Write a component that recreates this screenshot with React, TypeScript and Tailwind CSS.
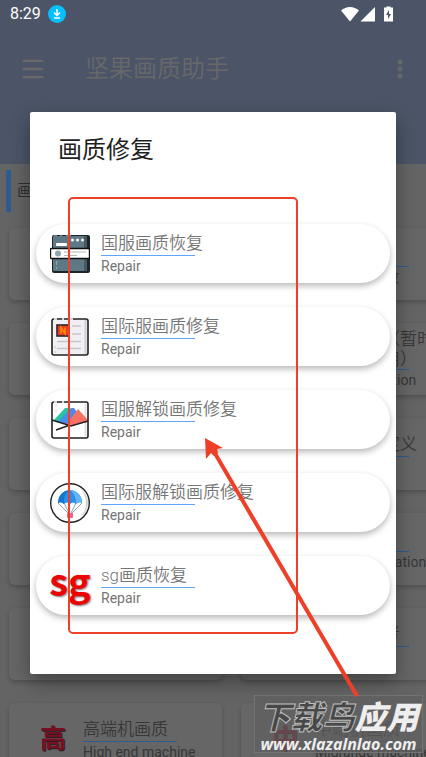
import type { ReactNode } from "react";
import { Menu } from "lucide-react";

interface RepairOption {
  title: string;
  subtitle: string;
  icon: ReactNode;
}

interface Feature {
  title: string;
  subtitle: string;
  icon?: string;
  tall?: boolean;
}

function ServerIcon() {
  return (
    <svg viewBox="0 0 40 40" className="h-10 w-10">
      <rect x="2" y="1" width="38" height="38" rx="2" fill="#1f2628" />
      <rect x="3" y="2" width="34" height="35" rx="1" fill="#5f7885" />
      <path d="M34 2h3v35h-3z" fill="#465a64" />
      <path d="M4 1h3M10 1h2M16 1h5" stroke="#d3dade" strokeWidth="1" />
      <rect x="6" y="9" width="11" height="3" rx="1" fill="#fff" />
      <circle cx="22.500" cy="6" r="1.500" fill="#fff" />
      <circle cx="27.500" cy="6" r="1.500" fill="#fff" />
      <circle cx="32.500" cy="6" r="1.500" fill="#fff" />
      <rect x="0.500" y="14.500" width="39" height="10" rx="1" fill="#fff" stroke="#111" strokeWidth="1.400" />
      <circle cx="8" cy="19.500" r="3" fill="#90a4b0" />
      <path d="M14 18h22M14 21.500h13" stroke="#b8b8b8" strokeWidth="1.200" />
      <path d="M6.500 27v4M6.500 33v2" stroke="#93a5ae" strokeWidth="1.200" />
    </svg>
  );
}

function NewsIcon() {
  return (
    <svg viewBox="0 0 40 40" className="h-10 w-10">
      <rect x="2" y="2" width="36" height="36" rx="2" fill="#f1eff4" stroke="#222" strokeWidth="1.600" />
      <path d="M35.500 3v34" stroke="#d0ced2" strokeWidth="2" />
      <path d="M4 2h3M12 2h2M18 2h5" stroke="#fff" strokeWidth="1.600" />
      <rect x="7" y="8" width="12" height="11" fill="#e93e25" stroke="#27262b" strokeWidth="1.600" />
      <path d="M11 16.500v-6l4 6v-6" fill="none" stroke="#ff8a00" strokeWidth="1.600" />
      <path d="M22 9h9M22 17h9M7 24.500h24M7 31.500h24" stroke="#c8c6ca" strokeWidth="1.600" />
      <path d="M5 29v3M5 34v2" stroke="#ccc" strokeWidth="1" />
    </svg>
  );
}

function PictureIcon() {
  return (
    <svg viewBox="0 0 40 40" className="h-10 w-10">
      <rect x="2" y="2" width="36" height="36" rx="2" fill="#fff" stroke="#222" strokeWidth="1.600" />
      <path d="M35.500 4v32" stroke="#e2dfe3" strokeWidth="2" />
      <path d="M4 2h3M12 2h2" stroke="#fff" strokeWidth="1.600" />
      <path d="M6 4v3M6 9v4" stroke="#ddd" strokeWidth="1" />
      <path d="M4 20L15 8h3l3 4-13 11z" fill="#28c5a0" />
      <path d="M8 22L21 8h3l3 4-9 13z" fill="#4a8bec" />
      <path d="M16 25L28 9l9 10v3L20 26z" fill="#fb7164" />
      <path d="M2 20l19 6 17-5M6 30l14-5" fill="none" stroke="#222" strokeWidth="1.600" />
    </svg>
  );
}

function ParachuteIcon() {
  return (
    <svg viewBox="0 0 40 40" className="h-10 w-10">
      <circle cx="20" cy="20" r="19.300" fill="#fff" stroke="#222" strokeWidth="1.400" />
      <path d="M30 5a18 18 0 0 1 0 30a22 22 0 0 0 0-30" fill="#d6d6d6" />
      <path d="M8 20l11 11M14 20l5 10M32 20L21 31M26 20l-5 10" stroke="#8ea5b3" strokeWidth="1" />
      <path d="M8 20a12 13 0 0 1 24 0q-3-2-6 1-3-3-6 0-3-3-6 0-3-3-6-1z" fill="#2c8eea" />
      <path d="M14 21q-1-10 6-14-11 1-12 13 3-2 6 1z" fill="#1676cf" />
      <path d="M26 21q0-10-6-14 11 1 12 13-3-2-6 1z" fill="#63b4f5" />
      <rect x="17" y="30" width="6" height="5" rx="1" fill="#fa6388" />
    </svg>
  );
}

function SgIcon() {
  return (
    <span className="flex h-10 w-10 items-center justify-center pb-3 font-['Noto_Sans_CJK_SC',sans-serif] text-[38px] leading-10 font-bold text-[#ec0505] [text-shadow:1px_1px_2px_#777]">
      sg
    </span>
  );
}

const repairOptions: RepairOption[] = [
  { title: "国服画质恢复", subtitle: "Repair", icon: <ServerIcon /> },
  { title: "国际服画质修复", subtitle: "Repair", icon: <NewsIcon /> },
  { title: "国服解锁画质修复", subtitle: "Repair", icon: <PictureIcon /> },
  { title: "国际服解锁画质修复", subtitle: "Repair", icon: <ParachuteIcon /> },
  { title: "sg画质恢复", subtitle: "Repair", icon: <SgIcon /> },
];

const features: Feature[] = [
  { title: "画质修复", subtitle: "Repair" },
  { title: "画质", subtitle: "优化画质特效" },
  { title: "画质", subtitle: "Quality" },
  { title: "国服超清（暂时暂不可使用）", subtitle: "Video resolution", tall: true },
  { title: "画质", subtitle: "Quality" },
  { title: "画质的自定义", subtitle: "Custom" },
  { title: "画质", subtitle: "Quality" },
  { title: "画质", subtitle: "Pixel optimization" },
  { title: "画质", subtitle: "Quality" },
  { title: "画质与参考", subtitle: "Refer" },
  { title: "高端机画质", subtitle: "High end machine", icon: "高" },
  { title: "中端机画质", subtitle: "Midrange machine", icon: "中" },
];

function StatusBar() {
  return (
    <div className="flex h-7 items-center px-[10px] text-white">
      <span className="text-base leading-7">8:29</span>
      <svg viewBox="0 0 18 18" className="ml-[7px] h-[18px] w-[18px]">
        <circle cx="9" cy="9" r="9" fill="#05bfff" />
        <path d="M9 4v6M6 7.500l3 3 3-3M6 13h6" fill="none" stroke="#fff" strokeWidth="1.500" />
      </svg>
      <svg viewBox="0 0 54 16" className="mr-[22px] ml-auto h-4 w-[54px]" fill="#fff">
        <path d="M1 4.500C6-0.300 14-0.300 19 4.500L10 15.500z" />
        <path d="M35 1v14.500H20.500z" />
        <path d="M44 1.500h2.500V0.500h4v1H53v14h-9z" />
        <path d="M49 4l-3 5h2v4l3-5h-2z" fill="#4b5567" />
      </svg>
    </div>
  );
}

function FeatureCard({ title, subtitle, icon, tall }: Feature) {
  return (
    <div className="flex h-[72px] items-center rounded-md bg-[#666] pl-[31px] shadow-[0_2px_5px_rgba(0,0,0,0.22)]">
      <span className="w-[43px] shrink-0 text-[26px] leading-8 font-bold text-[#780e22] [text-shadow:1px_1px_0_#222]">
        {icon}
      </span>
      <div className="w-[120px] shrink-0 text-[#373737]">
        <div className={`text-[17px] font-[350] ${tall ? "leading-5" : "leading-6"}`}>{title}</div>
        <div className="h-px w-[94px] bg-[#2e5c8f]" />
        <div className="text-sm leading-5 whitespace-nowrap">{subtitle}</div>
      </div>
    </div>
  );
}

function RepairDialog() {
  return (
    <div
      role="dialog"
      aria-labelledby="repair-title"
      className="w-full rounded-xs bg-white px-[6px] pt-[22px] pb-[59px] shadow-[0_8px_20px_rgba(0,0,0,0.35)]"
    >
      <h2 id="repair-title" className="pl-[22px] text-2xl leading-8 text-[#1f1f1f]">
        画质修复
      </h2>
      <div className="mt-[58px] flex flex-col gap-6">
        {repairOptions.map((option) => (
          <button
            key={option.title}
            type="button"
            className="flex h-[59px] w-full items-center rounded-full bg-white pl-[14px] text-left shadow-[0_3px_6px_rgba(0,0,0,0.28)]"
          >
            {option.icon}
            <span className="ml-[11px] block text-[#757575]">
              <span className="block text-[17px] leading-6 font-[350] whitespace-nowrap">
                {option.title}
              </span>
              <span className="block h-px w-[94px] bg-[#5fa5fb]" />
              <span className="block text-sm leading-5">{option.subtitle}</span>
            </span>
          </button>
        ))}
      </div>
    </div>
  );
}

export default function App() {
  return (
    <div className="relative h-screen overflow-hidden bg-[#646464] font-[Roboto,'Noto_Sans_CJK_SC',sans-serif]">
      <header className="h-[164px] bg-[#4b5567]">
        <StatusBar />
        <div className="flex h-[82px] items-center pr-[21px] pl-[19px] text-[#68686a]">
          <button type="button" aria-label="菜单">
            <Menu className="h-7 w-7" strokeWidth={2} />
          </button>
          <h1 className="ml-[38px] text-2xl leading-8 font-[350]">坚果画质助手</h1>
          <button type="button" aria-label="更多" className="ml-auto">
            <svg viewBox="0 0 10 20" className="h-5 w-[10px]" fill="currentColor">
              <circle cx="5" cy="3" r="2.400" />
              <circle cx="5" cy="10" r="2.400" />
              <circle cx="5" cy="17" r="2.400" />
            </svg>
          </button>
        </div>
      </header>

      <main>
        <div className="flex items-center pt-[6px] pl-[6px]">
          <span className="h-[42px] w-[5px] bg-[#2e5c8f]" />
          <h2 className="ml-[6px] text-base leading-6 font-[350] text-[#2e2e2e]">画质功能</h2>
        </div>
        <div className="grid grid-cols-[repeat(2,213px)] gap-x-[19px] gap-y-[23px] pt-4 pl-[9px]">
          {features.map((feature, index) => (
            <FeatureCard key={index} {...feature} />
          ))}
        </div>
      </main>

      <div className="absolute inset-0 flex items-start px-[30px] pt-28">
        <RepairDialog />
      </div>

      <div className="absolute right-[3px] bottom-1 w-[169px] border border-[#737373] bg-[#5f5f5f]/70 text-center italic">
        <div className="mt-1 text-[32px] leading-9 font-black whitespace-nowrap text-[#eee]">
          <span className="text-[#484848] [-webkit-text-stroke:1px_#bbb]">下载鸟</span>应用
        </div>
        <div className="font-['Open_Sans',sans-serif] text-base leading-4 font-bold text-[#eee]">
          www.xlazalnlao.com
        </div>
      </div>

      <div className="pointer-events-none absolute top-[197px] left-[68px] h-[437px] w-[230px] rounded-[5px] border-2 border-[#ee4028]" />
      <svg
        viewBox="0 0 156 264"
        className="pointer-events-none absolute top-[436px] left-[204px] h-[264px] w-[156px]"
      >
        <path d="M9 14L153 260" stroke="#ee4028" strokeWidth="4" />
        <path d="M1 2l1 21 5-6 3 3 4-3-1-4 6-1z" fill="#ee4028" />
      </svg>
    </div>
  );
}
